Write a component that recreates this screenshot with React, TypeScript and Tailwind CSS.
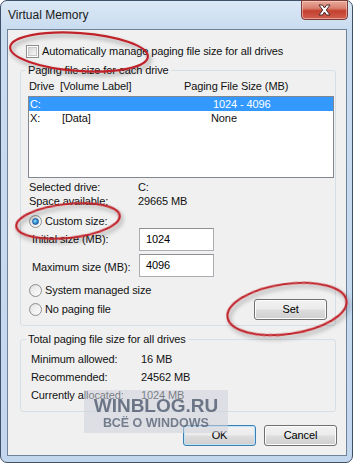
import React from "react";

const Checkbox = () => (
  <div className="w-[13px] h-[13px] border border-[#8e8f8f] bg-white p-[1px] shrink-0">
    <div className="w-full h-full bg-gradient-to-br from-[#d6d6d6] to-[#f6f6f6] border border-[#c8c8c8]" />
  </div>
);

const Radio = ({ checked }: { checked?: boolean }) => (
  <div className="w-[13px] h-[13px] rounded-full border border-[#8e8f8f] bg-gradient-to-br from-[#d9d9d9] to-[#ffffff] flex items-center justify-center shrink-0">
    {checked ? (
      <div className="w-[7px] h-[7px] rounded-full bg-[radial-gradient(circle_at_40%_40%,#a8e0ff_0%,#3a9be0_45%,#0e4f95_100%)] border border-[#1c5a98]" />
    ) : (
      <div className="w-[9px] h-[9px] rounded-full bg-gradient-to-br from-[#e6e6e6] to-[#fbfbfb]" />
    )}
  </div>
);

const Btn = ({ label, def }: { label: string; def?: boolean }) => (
  <div
    className={
      "w-[73px] h-[21px] rounded-[3px] border flex items-center justify-center bg-[linear-gradient(to_bottom,#f2f2f2_0%,#ebebeb_48%,#dddddd_52%,#cfcfcf_100%)] " +
      (def ? "border-[#3c7fb1] shadow-[inset_0_0_0_1px_#bde4fb]" : "border-[#707070] shadow-[inset_0_0_0_1px_#fcfcfc]")
    }
  >
    <span className="text-[11px] leading-[13px] text-black">{label}</span>
  </div>
);

export default function App() {
  return (
    <div
      className="w-[354px] h-[464px] bg-white relative overflow-hidden text-[11px] text-[#111] tracking-[-0.1px]"
      style={{ fontFamily: '"Liberation Sans", Arial, sans-serif' }}
    >
      <div className="w-[353px] h-[463px] rounded-[7px] border border-[#3f516a] bg-[linear-gradient(to_bottom,#dbe8f5_0px,#c9dcf0_28px,#c2d7ee_100%)] flex flex-col">
        {/* Title bar */}
        <div className="h-[28px] flex items-start shrink-0">
          <span className="pl-[7px] pt-[7px] text-[12px] leading-[15px] text-[#1a1a1a] tracking-normal">Virtual Memory</span>
          <div className="ml-auto mr-[4px] -mt-[1px] w-[47px] h-[20px] rounded-b-[4px] border border-[#7a3c37] bg-[linear-gradient(to_bottom,#e9a99b_0%,#d8806f_40%,#c4402f_55%,#d0604f_100%)] flex items-center justify-center shadow-[inset_0_0_0_1px_rgba(255,220,210,0.5)]">
            <svg width="15" height="12" viewBox="0 0 15 12">
              <path
                d="M2 1 L5.5 1 L7.5 4 L9.5 1 L13 1 L9.3 6 L13 11 L9.5 11 L7.5 8 L5.5 11 L2 11 L5.7 6 Z"
                fill="#ffffff"
                stroke="#4d2a28"
                strokeWidth="1"
                strokeLinejoin="round"
              />
            </svg>
          </div>
        </div>

        {/* Client area */}
        <div className="ml-[6px] w-[340px] h-[427px] border border-[#6f8298] bg-[#f0f0f0] flex flex-col shrink-0">
          <div className="mt-[15px] pl-[18px] flex items-center gap-[3px] h-[13px]">
            <Checkbox />
            <span className="leading-[13px]">Automatically manage paging file size for all drives</span>
          </div>

          <fieldset className="mt-[5px] ml-[12px] w-[316px] border border-[#d5dfe5] rounded-[3px] pb-[5px]">
            <legend className="ml-[5px] px-[2px] leading-[14px]">Paging file size for each drive</legend>
            <div className="mt-[2px] h-[14px] leading-[14px] pl-[8px] flex">
              <span className="w-[31px]">Drive</span>
              <span className="w-[124px]">[Volume Label]</span>
              <span>Paging File Size (MB)</span>
            </div>
            <div className="mt-[3px] ml-[7px] w-[306px] h-[82px] border border-[#828790] bg-white">
              <div className="h-[14px] leading-[14px] bg-[#3399ff] text-white flex pl-[1px]">
                <span className="w-[32px]">C:</span>
                <span className="w-[151px]"></span>
                <span>1024 - 4096</span>
              </div>
              <div className="h-[14px] leading-[14px] flex pl-[1px]">
                <span className="w-[32px]">X:</span>
                <span className="w-[149px]">[Data]</span>
                <span>None</span>
              </div>
            </div>
            <div className="mt-[2px] h-[14px] leading-[14px] pl-[8px] flex">
              <span className="w-[109px]">Selected drive:</span>
              <span>C:</span>
            </div>
            <div className="h-[14px] leading-[14px] pl-[8px] flex">
              <span className="w-[109px]">Space available:</span>
              <span>29665 MB</span>
            </div>
            <div className="mt-[7px] h-[13px] pl-[8px] flex items-center gap-[3px]">
              <Radio checked />
              <span className="leading-[13px]">Custom size:</span>
            </div>
            <div className="h-[23px] pl-[11px] flex items-center">
              <span className="w-[107px]">Initial size (MB):</span>
              <div className="w-[75px] h-[23px] border border-[#abadb3] border-t-[#8c8f94] bg-white flex items-center pl-[6px]">
                <span className="text-black">1024</span>
              </div>
            </div>
            <div className="mt-[3px] h-[23px] pl-[11px] flex items-center">
              <span className="w-[107px] pt-[3px]">Maximum size (MB):</span>
              <div className="w-[75px] h-[23px] border border-[#abadb3] border-t-[#8c8f94] bg-white flex items-center pl-[6px]">
                <span className="text-black">4096</span>
              </div>
            </div>
            <div className="mt-[7px] h-[13px] pl-[8px] flex items-center gap-[3px]">
              <Radio />
              <span className="leading-[13px]">System managed size</span>
            </div>
            <div className="mt-[2px] h-[21px] pl-[8px] pr-[8px] flex items-center gap-[3px]">
              <Radio />
              <span className="leading-[13px]">No paging file</span>
              <div className="ml-auto">
                <Btn label="Set" />
              </div>
            </div>
          </fieldset>

          <fieldset className="mt-[6px] ml-[12px] w-[316px] border border-[#d5dfe5] rounded-[3px] pb-[7px]">
            <legend className="ml-[5px] px-[2px] leading-[14px]">Total paging file size for all drives</legend>
            <div className="mt-[4px] h-[18px] leading-[18px] pl-[10px] flex">
              <span className="w-[110px]">Minimum allowed:</span>
              <span>16 MB</span>
            </div>
            <div className="h-[18px] leading-[18px] pl-[10px] flex">
              <span className="w-[110px]">Recommended:</span>
              <span>24562 MB</span>
            </div>
            <div className="h-[18px] leading-[18px] pl-[10px] flex">
              <span className="w-[110px]">Currently allocated:</span>
              <span>1024 MB</span>
            </div>
          </fieldset>

          <div className="mt-[13px] flex justify-end gap-[8px] pr-[9px]">
            <Btn label="OK" def />
            <Btn label="Cancel" />
          </div>
        </div>
      </div>

      {/* Watermark */}
      <div className="absolute left-[84px] top-[390px] w-[144px] h-[43px] bg-[rgba(205,210,220,0.55)] flex flex-col items-center">
        <span className="mt-[5px] text-[19px] leading-[21px] font-bold text-[rgba(70,82,102,0.75)] tracking-normal blur-[0.4px]">WINBLOG.RU</span>
        <span className="text-[12.5px] leading-[14px] font-bold text-[rgba(70,82,102,0.7)] tracking-normal blur-[0.4px]">ВСЁ О WINDOWS</span>
      </div>

      {/* Red annotation ellipses */}
      <svg className="absolute inset-0 pointer-events-none" width="354" height="464" viewBox="0 0 354 464">
        <defs>
          <filter id="sh" x="-20%" y="-40%" width="140%" height="180%">
            <feDropShadow dx="2" dy="3" stdDeviation="2" floodColor="#000" floodOpacity="0.35" />
          </filter>
        </defs>
        <g fill="none" stroke="#c0242b" strokeWidth="2.2" filter="url(#sh)">
          <ellipse cx="79" cy="52" rx="69" ry="19" transform="rotate(4 79 52)" />
          <ellipse cx="68" cy="221" rx="52" ry="17" transform="rotate(-6 68 221)" />
          <ellipse cx="287" cy="309" rx="60" ry="25" transform="rotate(-8 287 309)" />
        </g>
      </svg>
    </div>
  );
}
